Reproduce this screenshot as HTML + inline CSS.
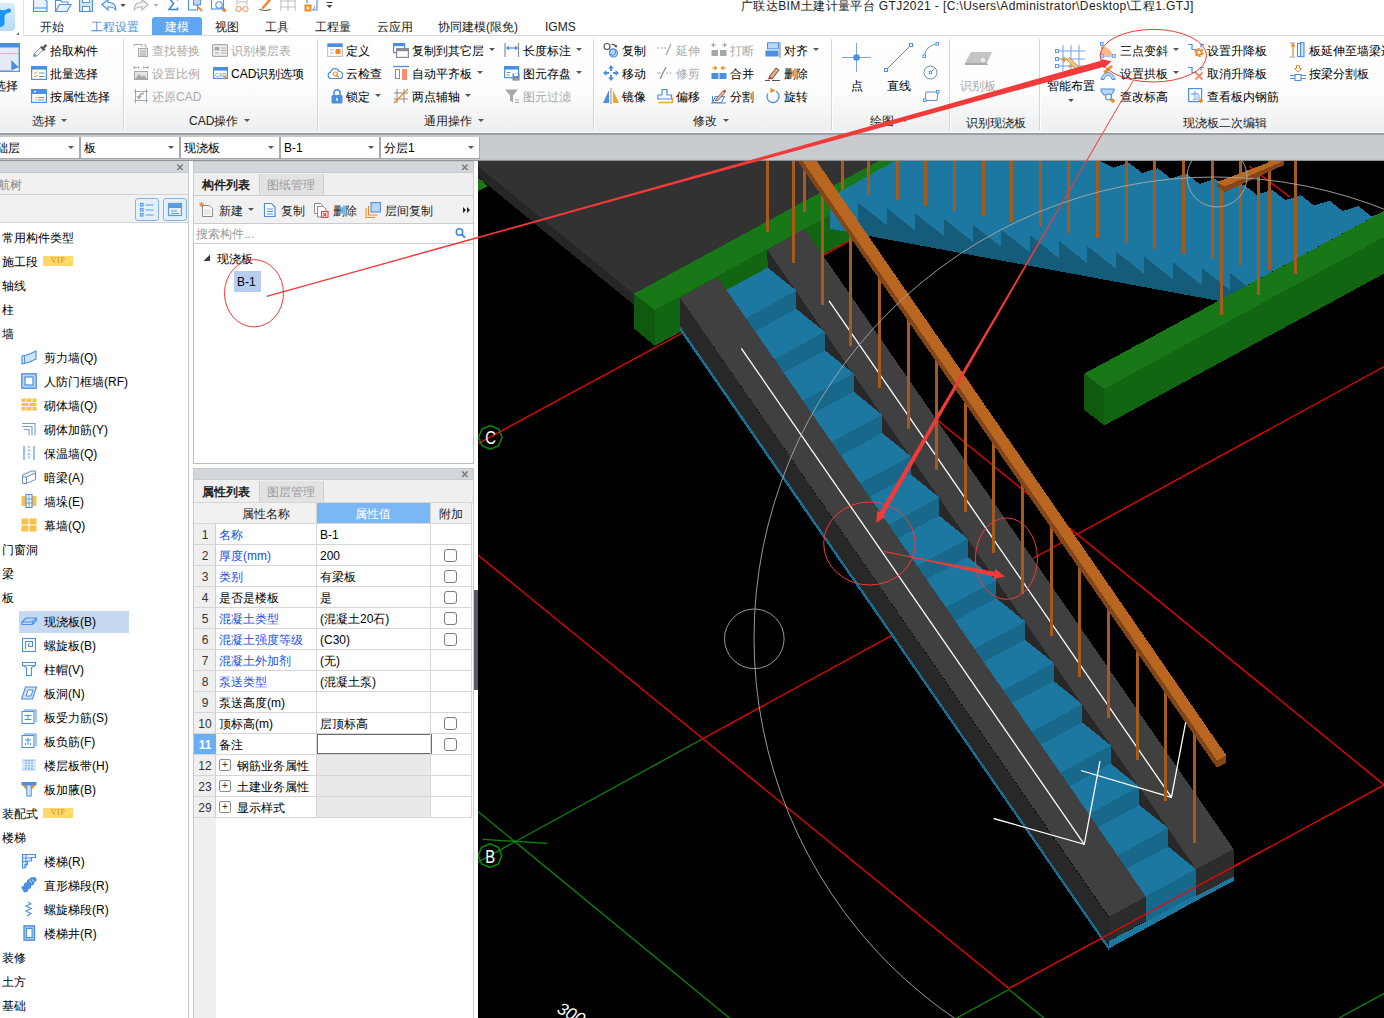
<!DOCTYPE html><html><head><meta charset="utf-8"><title>GTJ2021</title><style>
html,body{margin:0;padding:0}
body{width:1384px;height:1018px;overflow:hidden;position:relative;background:#fff;font-family:"Liberation Sans", sans-serif;font-size:12px}
.t{position:absolute;white-space:nowrap;font-family:"Liberation Sans", sans-serif}
.b{position:absolute;box-sizing:border-box}
svg{position:absolute;left:0;top:0;display:block}
.b svg{position:static}

</style></head><body>
<div class="b" style="left:0px;top:0px;width:1384px;height:36px;background:#ffffff;"></div>
<div class="t " style="left:741px;top:-2.3px;height:16px;line-height:16px;color:#222;font-size:12px;letter-spacing:0.4px">广联达BIM土建计量平台 GTJ2021 - [C:\Users\Administrator\Desktop\工程1.GTJ]</div>
<div class="b" style="left:-6px;top:3px;width:21px;height:28px;border-radius:4px;background:linear-gradient(#d6edfd,#b7dbf7)"></div>
<svg width="24" height="36" viewBox="0 0 24 36"><path d="M-2 9 Q3 11.500 8.500 8.500 Q11 8 11 10.200 Q11 12.500 8 13 Q5 13.500 4.500 16.500 L4.500 23.500 Q4 27 0 27 L-2 27 Z" fill="#1a97f5"/><path d="M16 35 L19 32 L19 35 Z" fill="#777"/></svg>
<div class="b" style="left:23px;top:0px;width:1px;height:36px;background:#e2e2e2;"></div>
<svg width="400" height="16" viewBox="0 0 400 16"><path d="M33.500 -2h10l3.500 3.500v10h-13.500z" fill="#eaf2fc" stroke="#4a8fe0" stroke-width="1.100"/><path d="M33.500 8h13.500" stroke="#4a8fe0" stroke-width="1"/><path d="M55.500 11.500v-11h5l1.500 1.500h6v2" fill="none" stroke="#4a8fe0" stroke-width="1.100"/><path d="M55.500 11.500l4-7h11.500l-4 7z" fill="#eaf2fc" stroke="#4a8fe0" stroke-width="1.100"/><rect x="79.500" y="-2" width="13" height="13.500" fill="#cfe2f8" stroke="#4a8fe0" stroke-width="1.100"/><rect x="82.500" y="-2" width="7" height="4.500" fill="#fff" stroke="#4a8fe0" stroke-width="0.900"/><rect x="82.500" y="6.500" width="7" height="5" fill="#fff" stroke="#4a8fe0" stroke-width="0.900"/><path d="M102 4.500l6-5v3q8-.500 8 8-2-4-8-3.500v3z" fill="#eaf2fc" stroke="#4a8fe0" stroke-width="1.100"/><path d="M120.500 4h5l-2.500 3z" fill="#444"/><path d="M148 4.500l-6-5v3q-8-.500-8 8 2-4 8-3.500v3z" fill="#f2f2f2" stroke="#b5b5b5" stroke-width="1.100"/><path d="M153.500 4h5l-2.500 3z" fill="#b5b5b5"/><path d="M177.500 0.500v-2.500h-8.500l4.500 5.500-4.500 6h8.500v-2" fill="none" stroke="#3c7fd0" stroke-width="1.500"/><rect x="188.500" y="-2" width="9" height="12" fill="#fff" stroke="#4a8fe0" stroke-width="1.100"/><rect x="193.500" y="-2" width="7" height="7" fill="#b9d6f7" stroke="#4a8fe0" stroke-width="0.900"/><path d="M198 7l4 4" stroke="#f08a24" stroke-width="1.800"/><rect x="211.500" y="-2" width="12" height="11" fill="#fff" stroke="#4a8fe0" stroke-width="1.100"/><circle cx="219" cy="5" r="3.200" fill="#fff" stroke="#4a8fe0" stroke-width="1.100"/><path d="M221.500 7.500l2.500 2.500" stroke="#4a8fe0" stroke-width="1.300"/><rect x="222.500" y="8.500" width="3.400" height="3.400" fill="#f08a24" transform="rotate(45 224.200 10.200)"/><path d="M237 -2v7M247 -2v7M238 2h8" stroke="#c7b8a8" stroke-width="1" fill="none"/><circle cx="238.500" cy="9" r="2.500" fill="none" stroke="#f0a070" stroke-width="1.100"/><circle cx="245.500" cy="9" r="2.500" fill="none" stroke="#f0a070" stroke-width="1.100"/><path d="M241 9h2" stroke="#f0a070" stroke-width="1"/><path d="M262 7l7-8 2 1.500-7 8-2.500.500z" fill="#f08a24"/><path d="M259 9.500q6 2 12 0" fill="none" stroke="#555" stroke-width="1"/><path d="M281 -2v13M288 -2v13M295 -2v13M280 1h16M280 7h16" stroke="#c4c4c4" stroke-width="1.100"/><path d="M307 3v-5h10v12h-5" fill="none" stroke="#4a8fe0" stroke-width="1.100"/><rect x="304.500" y="4.500" width="7" height="7" fill="#f08a24"/><path d="M308 6v4M306 8h4" stroke="#fff" stroke-width="1"/><path d="M314.500 6v3h-2" stroke="#8c8c8c" stroke-width="0.800" fill="none"/><path d="M326.500 2.500h6" stroke="#444" stroke-width="1"/><path d="M326.500 5h6l-3 3z" fill="#444"/></svg>
<div class="b" style="left:152px;top:17px;width:50px;height:19px;background:#5ea6f2;border-radius:3px 3px 0 0"></div>
<div class="t " style="left:165px;top:19.2px;height:16px;line-height:16px;color:#fff;font-size:12px;">建模</div>
<div class="t " style="left:40px;top:19.2px;height:16px;line-height:16px;color:#222;font-size:12px;">开始</div>
<div class="t " style="left:91px;top:19.2px;height:16px;line-height:16px;color:#4a90d9;font-size:12px;">工程设置</div>
<div class="t " style="left:215px;top:19.2px;height:16px;line-height:16px;color:#222;font-size:12px;">视图</div>
<div class="t " style="left:265px;top:19.2px;height:16px;line-height:16px;color:#222;font-size:12px;">工具</div>
<div class="t " style="left:315px;top:19.2px;height:16px;line-height:16px;color:#222;font-size:12px;">工程量</div>
<div class="t " style="left:377px;top:19.2px;height:16px;line-height:16px;color:#222;font-size:12px;">云应用</div>
<div class="t " style="left:438px;top:19.2px;height:16px;line-height:16px;color:#222;font-size:12px;">协同建模(限免)</div>
<div class="t " style="left:545px;top:19.2px;height:16px;line-height:16px;color:#222;font-size:12px;">IGMS</div>
<div class="b" style="left:0;top:36px;width:1384px;height:97px;background:linear-gradient(#ffffff 0%,#fdfdfd 55%,#eceeef 100%)"></div>
<div class="b" style="left:24px;top:35px;width:1360px;height:1px;background:#d9d9d9;"></div>
<div class="b" style="left:0px;top:131px;width:1384px;height:2px;background:#f4f5f6;"></div>
<div class="b" style="left:0px;top:133px;width:1384px;height:1px;background:#9b9ea3;"></div>
<div class="b" style="left:123px;top:39px;width:1px;height:91px;background:#d4d6d8;"></div>
<div class="b" style="left:124px;top:39px;width:1px;height:91px;background:#ffffff;"></div>
<div class="b" style="left:317px;top:39px;width:1px;height:91px;background:#d4d6d8;"></div>
<div class="b" style="left:318px;top:39px;width:1px;height:91px;background:#ffffff;"></div>
<div class="b" style="left:593px;top:39px;width:1px;height:91px;background:#d4d6d8;"></div>
<div class="b" style="left:594px;top:39px;width:1px;height:91px;background:#ffffff;"></div>
<div class="b" style="left:831px;top:39px;width:1px;height:91px;background:#d4d6d8;"></div>
<div class="b" style="left:832px;top:39px;width:1px;height:91px;background:#ffffff;"></div>
<div class="b" style="left:949px;top:39px;width:1px;height:91px;background:#d4d6d8;"></div>
<div class="b" style="left:950px;top:39px;width:1px;height:91px;background:#ffffff;"></div>
<div class="b" style="left:1039px;top:39px;width:1px;height:91px;background:#d4d6d8;"></div>
<div class="b" style="left:1040px;top:39px;width:1px;height:91px;background:#ffffff;"></div>
<div class="b" style="left:33px;top:42px;width:16px;height:16px"><svg width="16" height="16" viewBox="0 0 16 16"><path d="M0.500 14.500l1-3 6.500-6.500 2.500 2.500-6.500 6.500z" fill="#eef2f7" stroke="#8a8f96" stroke-width="0.900"/><path d="M0.500 14.500l1-3 2 2z" fill="#2f86e6"/><path d="M7 5.500l1.800-1.800 1 1 2.700-2.700 1.800 1.800-2.700 2.700 1 1-1.800 1.800z" fill="#5a5f66"/></svg></div>
<div class="t " style="left:50px;top:42.7px;height:16px;line-height:16px;color:#000;font-size:12px;">拾取构件</div>
<div class="b" style="left:133px;top:42px;width:16px;height:16px"><svg width="16" height="16" viewBox="0 0 16 16"><path d="M1 2.5h8M1 2.5v2M9 2.5v2" stroke="#a8a8a8" fill="none"/><path d="M11 3l2 0 0 3" stroke="#a8a8a8" fill="none"/><rect x="5.5" y="6.5" width="9" height="8" fill="#e8e8e8" stroke="#a8a8a8"/><path d="M7 9h6M7 11h6M7 13h6" stroke="#a8a8a8"/></svg></div>
<div class="t " style="left:152px;top:42.7px;height:16px;line-height:16px;color:#a9a9a9;font-size:12px;">查找替换</div>
<div class="b" style="left:212px;top:42px;width:16px;height:16px"><svg width="16" height="16" viewBox="0 0 16 16"><rect x="0.6" y="2.6" width="14.8" height="11.8" rx="1" fill="#f2f2f2" stroke="#a8a8a8" stroke-width="1.2"/><rect x="2.5" y="5" width="5" height="3.5" fill="#a8a8a8"/><path d="M9 6h5M9 8.5h5M3 11h4M9 11h5" stroke="#a8a8a8"/></svg></div>
<div class="t " style="left:231px;top:42.7px;height:16px;line-height:16px;color:#a9a9a9;font-size:12px;">识别楼层表</div>
<div class="b" style="left:327px;top:42px;width:16px;height:16px"><svg width="16" height="16" viewBox="0 0 16 16"><rect x="0.6" y="1.6" width="14.8" height="12.8" fill="#fff" stroke="#b9c6d6" stroke-width="1.2"/><rect x="0.6" y="1.6" width="14.8" height="3.4" fill="#4a8fe0"/><path d="M3 8h4M3 11h4" stroke="#9cc3f2" stroke-width="1.2"/><rect x="8.5" y="7" width="5" height="5" fill="#f08a24"/></svg></div>
<div class="t " style="left:346px;top:42.7px;height:16px;line-height:16px;color:#000;font-size:12px;">定义</div>
<div class="b" style="left:393px;top:42px;width:16px;height:16px"><svg width="16" height="16" viewBox="0 0 16 16"><rect x="0.6" y="1.6" width="11" height="9" fill="#fff" stroke="#4a8fe0" stroke-width="1.2"/><rect x="0.6" y="1.6" width="11" height="2.6" fill="#4a8fe0"/><rect x="3.6" y="6.6" width="11.8" height="8.8" fill="#fff" stroke="#8c8c8c" stroke-width="1.2"/><rect x="3.6" y="6.6" width="11.8" height="2.6" fill="#8c8c8c"/></svg></div>
<div class="t " style="left:412px;top:42.7px;height:16px;line-height:16px;color:#000;font-size:12px;">复制到其它层</div>
<div class="b" style="left:488.5px;top:48.25px;width:0;height:0;border-left:3.5px solid transparent;border-right:3.5px solid transparent;border-top:3.5px solid #555"></div>
<div class="b" style="left:504px;top:42px;width:16px;height:16px"><svg width="16" height="16" viewBox="0 0 16 16"><path d="M1 1v14M14.5 1v14" stroke="#8c8c8c" stroke-width="1.2"/><path d="M2.5 6h11" stroke="#4a8fe0" stroke-width="1.3"/><path d="M2 6l3-2.5v5zM14 6l-3-2.5v5z" fill="#4a8fe0"/></svg></div>
<div class="t " style="left:523px;top:42.7px;height:16px;line-height:16px;color:#000;font-size:12px;">长度标注</div>
<div class="b" style="left:575.5px;top:48.25px;width:0;height:0;border-left:3.5px solid transparent;border-right:3.5px solid transparent;border-top:3.5px solid #555"></div>
<div class="b" style="left:603px;top:42px;width:16px;height:16px"><svg width="16" height="16" viewBox="0 0 16 16"><circle cx="4" cy="4.5" r="3" fill="#fff" stroke="#555" stroke-width="1.1"/><path d="M8.5 2.5q3.5-.5 4.5 2" fill="none" stroke="#555" stroke-width="1.1"/><path d="M14.5 3l-1.2 3-2-2z" fill="#555"/><circle cx="10.5" cy="11" r="4" fill="#b9d6f7" stroke="#4a8fe0" stroke-width="1.2"/><circle cx="9.5" cy="10" r="3.2" fill="none" stroke="#4a8fe0" stroke-width="1"/></svg></div>
<div class="t " style="left:622px;top:42.7px;height:16px;line-height:16px;color:#000;font-size:12px;">复制</div>
<div class="b" style="left:657px;top:42px;width:16px;height:16px"><svg width="16" height="16" viewBox="0 0 16 16"><path d="M0 6h2M3.5 6h2M7 6h2" stroke="#a8a8a8" stroke-width="1.2"/><path d="M9 13l5-11" stroke="#a8a8a8" stroke-width="1.3"/></svg></div>
<div class="t " style="left:676px;top:42.7px;height:16px;line-height:16px;color:#a9a9a9;font-size:12px;">延伸</div>
<div class="b" style="left:711px;top:42px;width:16px;height:16px"><svg width="16" height="16" viewBox="0 0 16 16"><rect x="0.5" y="8" width="6.5" height="6" fill="#a8a8a8"/><rect x="9" y="8" width="6.5" height="6" fill="#a8a8a8"/><path d="M1 3h4M15 3h-4" stroke="#a8a8a8" stroke-width="1.2"/><path d="M0 3l3-2.5v5zM16 3l-3-2.5v5z" fill="#a8a8a8"/></svg></div>
<div class="t " style="left:730px;top:42.7px;height:16px;line-height:16px;color:#a9a9a9;font-size:12px;">打断</div>
<div class="b" style="left:765px;top:42px;width:16px;height:16px"><svg width="16" height="16" viewBox="0 0 16 16"><rect x="2.5" y="0.800" width="11" height="6" fill="#b9d6f7" stroke="#4a8fe0" stroke-width="1"/><rect x="0.5" y="8.500" width="13" height="6" fill="#4a8fe0"/><path d="M15 0v16" stroke="#8c8c8c" stroke-width="1.200"/></svg></div>
<div class="t " style="left:784px;top:42.7px;height:16px;line-height:16px;color:#000;font-size:12px;">对齐</div>
<div class="b" style="left:812.5px;top:48.25px;width:0;height:0;border-left:3.5px solid transparent;border-right:3.5px solid transparent;border-top:3.5px solid #555"></div>
<div class="b" style="left:1100px;top:42px;width:16px;height:16px"><svg width="16" height="16" viewBox="0 0 16 16"><path d="M2 3v11h13" fill="none" stroke="#4a8fe0" stroke-width="1.100"/><path d="M2 4c6 1 10 5 11 10h-11z" fill="#f7b98a"/><rect x="0.500" y="0.500" width="2.600" height="2.600" fill="#fff" stroke="#4a8fe0" stroke-width="0.900"/><rect x="0.700" y="12.700" width="2.600" height="2.600" fill="#fff" stroke="#4a8fe0" stroke-width="0.900"/><rect x="12.700" y="12.700" width="2.600" height="2.600" fill="#fff" stroke="#4a8fe0" stroke-width="0.900"/></svg></div>
<div class="t " style="left:1120px;top:42.7px;height:16px;line-height:16px;color:#000;font-size:12px;">三点变斜</div>
<div class="b" style="left:1172.5px;top:48.25px;width:0;height:0;border-left:3.5px solid transparent;border-right:3.5px solid transparent;border-top:3.5px solid #555"></div>
<div class="b" style="left:1188px;top:42px;width:16px;height:16px"><svg width="16" height="16" viewBox="0 0 16 16"><path d="M0 2.500h4v5h4.500" fill="none" stroke="#4a8fe0" stroke-width="1.200"/><path d="M16 2.500h-3v3" fill="none" stroke="#4a8fe0" stroke-width="1.200"/><circle cx="11" cy="10.500" r="3.400" fill="none" stroke="#f08a24" stroke-width="2.400" stroke-dasharray="2.200 1.300"/><circle cx="11" cy="10.500" r="2.500" fill="none" stroke="#f08a24" stroke-width="1.600"/></svg></div>
<div class="t " style="left:1207px;top:42.7px;height:16px;line-height:16px;color:#000;font-size:12px;">设置升降板</div>
<div class="b" style="left:1290px;top:42px;width:16px;height:16px"><svg width="16" height="16" viewBox="0 0 16 16"><path d="M3 3v11" stroke="#f08a24" stroke-width="1.300"/><path d="M3 1l2.500 3.500h-5z" fill="#f08a24"/><path d="M0 1h5M0 15h5" stroke="#8c8c8c" stroke-width="0.900"/><rect x="7.500" y="1.500" width="3" height="13" fill="#fff" stroke="#4a8fe0" stroke-width="1.100"/><rect x="10.500" y="0.700" width="3.500" height="14" fill="#cfe2f8" stroke="#4a8fe0" stroke-width="1.100"/></svg></div>
<div class="t " style="left:1309px;top:42.7px;height:16px;line-height:16px;color:#000;font-size:12px;">板延伸至墙梁边</div>
<div class="b" style="left:31px;top:65px;width:16px;height:16px"><svg width="16" height="16" viewBox="0 0 16 16"><rect x="0.6" y="1.6" width="14.8" height="12.8" fill="#fff" stroke="#4a8fe0" stroke-width="1.2"/><rect x="0.6" y="1.600" width="14.8" height="3" fill="#4a8fe0"/><path d="M3 7.500l1.200 1.200 2-2.200M3 11l1.200 1.200 2-2.200" stroke="#f08a24" stroke-width="1" fill="none"/><path d="M8 8h5.500M8 11.500h5.500" stroke="#7f8fa6" stroke-width="1.100"/></svg></div>
<div class="t " style="left:50px;top:65.7px;height:16px;line-height:16px;color:#000;font-size:12px;">批量选择</div>
<div class="b" style="left:133px;top:65px;width:16px;height:16px"><svg width="16" height="16" viewBox="0 0 16 16"><path d="M1 1v3M15 1v3M1 2.5h3M15 2.5h-3" stroke="#a8a8a8" fill="none"/><path d="M6 1l-2 1.5 2 1.5zM10 1l2 1.5-2 1.5z" fill="#a8a8a8"/><rect x="1.5" y="6.5" width="13" height="8" fill="#e4e4e4" stroke="#a8a8a8"/><path d="M2 14l4-5 3 3 2-2 3 4z" fill="#a8a8a8"/></svg></div>
<div class="t " style="left:152px;top:65.7px;height:16px;line-height:16px;color:#a9a9a9;font-size:12px;">设置比例</div>
<div class="b" style="left:213px;top:65px;width:16px;height:16px"><svg width="16" height="16" viewBox="0 0 16 16"><rect x="0.6" y="2.6" width="13.8" height="10.8" fill="#fff" stroke="#4a8fe0" stroke-width="1.2"/><rect x="0.6" y="2.6" width="13.8" height="3" fill="#4a8fe0"/><text x="7.5" y="11.8" font-size="5.5" text-anchor="middle" fill="#4a8fe0" font-family="Liberation Sans, sans-serif">CAD</text><path d="M11 10l4 3-2 .3 -1 2z" fill="#f08a24"/></svg></div>
<div class="t " style="left:231px;top:65.7px;height:16px;line-height:16px;color:#000;font-size:12px;">CAD识别选项</div>
<div class="b" style="left:327px;top:65px;width:16px;height:16px"><svg width="16" height="16" viewBox="0 0 16 16"><path d="M4 13.5a3.2 3.2 0 0 1-.3-6.3A4.3 4.3 0 0 1 12 6.5a3.5 3.5 0 0 1 .5 7z" fill="#fff" stroke="#4a8fe0" stroke-width="1.2"/><circle cx="8.3" cy="9" r="2" fill="none" stroke="#f08a24" stroke-width="1.2"/><path d="M9.8 10.5l2 2" stroke="#f08a24" stroke-width="1.3"/></svg></div>
<div class="t " style="left:346px;top:65.7px;height:16px;line-height:16px;color:#000;font-size:12px;">云检查</div>
<div class="b" style="left:393px;top:65px;width:16px;height:16px"><svg width="16" height="16" viewBox="0 0 16 16"><path d="M0 1.5h16" stroke="#4a8fe0" stroke-width="1.3"/><rect x="2.5" y="4.5" width="4" height="9" fill="#fff" stroke="#8c8c8c"/><rect x="9" y="4" width="5" height="11" fill="#f4906a"/></svg></div>
<div class="t " style="left:412px;top:65.7px;height:16px;line-height:16px;color:#000;font-size:12px;">自动平齐板</div>
<div class="b" style="left:476.5px;top:71.25px;width:0;height:0;border-left:3.5px solid transparent;border-right:3.5px solid transparent;border-top:3.5px solid #555"></div>
<div class="b" style="left:504px;top:65px;width:16px;height:16px"><svg width="16" height="16" viewBox="0 0 16 16"><rect x="0.6" y="1.6" width="14" height="11" fill="#fff" stroke="#4a8fe0" stroke-width="1.2"/><rect x="0.6" y="1.6" width="14" height="3" fill="#4a8fe0"/><path d="M2.5 7.5h4M2.5 10h3" stroke="#8c8c8c"/><rect x="8.5" y="8.5" width="7" height="7" fill="#4a8fe0"/><rect x="10" y="8.5" width="4" height="2.5" fill="#fff"/><rect x="10.5" y="12.5" width="3" height="3" fill="#f08a24"/></svg></div>
<div class="t " style="left:523px;top:65.7px;height:16px;line-height:16px;color:#000;font-size:12px;">图元存盘</div>
<div class="b" style="left:575.5px;top:71.25px;width:0;height:0;border-left:3.5px solid transparent;border-right:3.5px solid transparent;border-top:3.5px solid #555"></div>
<div class="b" style="left:603px;top:65px;width:16px;height:16px"><svg width="16" height="16" viewBox="0 0 16 16"><path d="M8 0l3 3.5h-2v2.5h-2v-2.5h-2zM8 16l3-3.5h-2v-2.5h-2v2.5h-2zM0 8l3.5-3v2h2.5v2h-2.5v2zM16 8l-3.5-3v2h-2.5v2h2.5v2z" fill="#4a8fe0"/></svg></div>
<div class="t " style="left:622px;top:65.7px;height:16px;line-height:16px;color:#000;font-size:12px;">移动</div>
<div class="b" style="left:657px;top:65px;width:16px;height:16px"><svg width="16" height="16" viewBox="0 0 16 16"><path d="M0 8h4M9 8h2M12.5 8h2" stroke="#a8a8a8" stroke-width="1.2"/><path d="M3 14l6-12" stroke="#8c8c8c" stroke-width="1.3"/></svg></div>
<div class="t " style="left:676px;top:65.7px;height:16px;line-height:16px;color:#a9a9a9;font-size:12px;">修剪</div>
<div class="b" style="left:711px;top:65px;width:16px;height:16px"><svg width="16" height="16" viewBox="0 0 16 16"><rect x="0.5" y="8" width="7" height="6" fill="#4a8fe0"/><rect x="8.5" y="8" width="7" height="6" fill="#4a8fe0"/><path d="M1 3h3M15 3h-3" stroke="#f08a24" stroke-width="1.2"/><path d="M6.5 3l-3-2.5v5zM9.500 3l3-2.5v5z" fill="#f08a24"/></svg></div>
<div class="t " style="left:730px;top:65.7px;height:16px;line-height:16px;color:#000;font-size:12px;">合并</div>
<div class="b" style="left:765px;top:65px;width:16px;height:16px"><svg width="16" height="16" viewBox="0 0 16 16"><path d="M4 12l7-9 3 2-7 9z" fill="#d9b38c" stroke="#6b4a2a" stroke-width="1"/><path d="M2.500 14.500l2-3 3 2z" fill="#c0392b"/><path d="M0 15.500h5M7 15.500h8" stroke="#555" stroke-width="1"/></svg></div>
<div class="t " style="left:784px;top:65.7px;height:16px;line-height:16px;color:#000;font-size:12px;">删除</div>
<div class="b" style="left:1100px;top:65px;width:16px;height:16px"><svg width="16" height="16" viewBox="0 0 16 16"><path d="M1 14.500c1-5 5-7 7-7s6 2 7 7h-3c-.500-2.500-2-4-4-4s-3.500 1.500-4 4z" fill="#b9d6f7" stroke="#4a8fe0" stroke-width="1"/><path d="M3 7l8-7 2 1.500-7 7z" fill="#f08a24"/></svg></div>
<div class="t " style="left:1120px;top:65.7px;height:16px;line-height:16px;color:#000;font-size:12px;">设置拱板</div>
<div class="b" style="left:1172.5px;top:71.25px;width:0;height:0;border-left:3.5px solid transparent;border-right:3.5px solid transparent;border-top:3.5px solid #555"></div>
<div class="b" style="left:1188px;top:65px;width:16px;height:16px"><svg width="16" height="16" viewBox="0 0 16 16"><path d="M0 2.500h4v5h4.500" fill="none" stroke="#4a8fe0" stroke-width="1.200"/><path d="M16 2.500h-3v3" fill="none" stroke="#4a8fe0" stroke-width="1.200"/><path d="M7.500 7.500l7 7M14.500 7.500l-7 7" stroke="#f08a6a" stroke-width="1.800"/></svg></div>
<div class="t " style="left:1207px;top:65.7px;height:16px;line-height:16px;color:#000;font-size:12px;">取消升降板</div>
<div class="b" style="left:1290px;top:65px;width:16px;height:16px"><svg width="16" height="16" viewBox="0 0 16 16"><path d="M6.500 0.500h3v3h2l-3.500 3.500-3.500-3.500h2z" fill="#fff" stroke="#f08a24" stroke-width="1"/><rect x="5" y="9.500" width="6" height="6" fill="#fff" stroke="#4a8fe0" stroke-width="1.100"/><path d="M0 10.500h5M11 10.500h5M0 13.500h5M11 13.500h5" stroke="#4a8fe0" stroke-width="1.100"/></svg></div>
<div class="t " style="left:1309px;top:65.7px;height:16px;line-height:16px;color:#000;font-size:12px;">按梁分割板</div>
<div class="b" style="left:31px;top:88px;width:16px;height:16px"><svg width="16" height="16" viewBox="0 0 16 16"><rect x="0.6" y="1.600" width="14.8" height="12.800" fill="#fff" stroke="#4a8fe0" stroke-width="1.2"/><rect x="0.6" y="1.600" width="14.8" height="4.400" fill="#4a8fe0"/><path d="M2.500 3l1.500 1.800 1.500-1.800z" fill="#fff"/><path d="M4.500 9.500h1.200M4.500 12h1.200M7 9.500h6M7 12h6" stroke="#7f8fa6" stroke-width="1.100"/></svg></div>
<div class="t " style="left:50px;top:88.7px;height:16px;line-height:16px;color:#000;font-size:12px;">按属性选择</div>
<div class="b" style="left:133px;top:88px;width:16px;height:16px"><svg width="16" height="16" viewBox="0 0 16 16"><path d="M2.5 1v14M13.5 1v14M1 3.5h14M1 12.5h14" stroke="#a8a8a8" fill="none"/><path d="M11 5.5q-5 0-5 4.5M4 8l2 2.5 2-2.5" stroke="#a8a8a8" fill="none" stroke-width="1.3"/></svg></div>
<div class="t " style="left:152px;top:88.7px;height:16px;line-height:16px;color:#a9a9a9;font-size:12px;">还原CAD</div>
<div class="b" style="left:329px;top:88px;width:16px;height:16px"><svg width="16" height="16" viewBox="0 0 16 16"><rect x="2.5" y="7" width="11" height="8.5" rx="1.5" fill="#4a8fe0"/><path d="M5 7V4.8a3 3 0 0 1 6 0V7" fill="none" stroke="#4a8fe0" stroke-width="1.6"/><rect x="7.3" y="10" width="1.4" height="3" fill="#fff"/></svg></div>
<div class="t " style="left:346px;top:88.7px;height:16px;line-height:16px;color:#000;font-size:12px;">锁定</div>
<div class="b" style="left:374.5px;top:94.25px;width:0;height:0;border-left:3.5px solid transparent;border-right:3.5px solid transparent;border-top:3.5px solid #555"></div>
<div class="b" style="left:393px;top:88px;width:16px;height:16px"><svg width="16" height="16" viewBox="0 0 16 16"><path d="M4 1v14M11 1v14M1 5h14M1 11h14" stroke="#8c8c8c" stroke-width="1"/><path d="M1 15L15 1" stroke="#f08a24" stroke-width="1.2"/></svg></div>
<div class="t " style="left:412px;top:88.7px;height:16px;line-height:16px;color:#000;font-size:12px;">两点辅轴</div>
<div class="b" style="left:464.5px;top:94.25px;width:0;height:0;border-left:3.5px solid transparent;border-right:3.5px solid transparent;border-top:3.5px solid #555"></div>
<div class="b" style="left:504px;top:88px;width:16px;height:16px"><svg width="16" height="16" viewBox="0 0 16 16"><path d="M1 1.5h13l-5 6v7l-3-2v-5z" fill="#a8a8a8"/><path d="M11 12h4M11 14.5h4" stroke="#a8a8a8" stroke-width="1.2"/></svg></div>
<div class="t " style="left:523px;top:88.7px;height:16px;line-height:16px;color:#a9a9a9;font-size:12px;">图元过滤</div>
<div class="b" style="left:603px;top:88px;width:16px;height:16px"><svg width="16" height="16" viewBox="0 0 16 16"><path d="M6 2v13h-6z" fill="#4a8fe0"/><path d="M10 2v13h6z" fill="#f5a623"/><path d="M8 0v16" stroke="#8c8c8c" stroke-width="1"/></svg></div>
<div class="t " style="left:622px;top:88.7px;height:16px;line-height:16px;color:#000;font-size:12px;">镜像</div>
<div class="b" style="left:657px;top:88px;width:16px;height:16px"><svg width="16" height="16" viewBox="0 0 16 16"><path d="M5 1.5h5v5.5h4.5v4h-13.5v-4h4z" fill="#fff" stroke="#4a8fe0" stroke-width="1.2"/><path d="M1.5 14.5h14v-5" fill="none" stroke="#f5a623" stroke-width="1.4"/></svg></div>
<div class="t " style="left:676px;top:88.7px;height:16px;line-height:16px;color:#000;font-size:12px;">偏移</div>
<div class="b" style="left:711px;top:88px;width:16px;height:16px"><svg width="16" height="16" viewBox="0 0 16 16"><path d="M3.5 8.500h9l-2 6h-9z" fill="#fff" stroke="#4a8fe0" stroke-width="1.1" transform="translate(2,0) skewX(-8)"/><path d="M0 15h15M1.5 8v7" stroke="#4a8fe0" stroke-width="1"/><path d="M5 11l7-8 2 1.500-7 8-2.500.500z" fill="#f3b9a0" stroke="#7a5a50" stroke-width="0.900"/><path d="M12 3l1.500-1.500 2 1.500-1.500 1.500z" fill="#d94a3a"/></svg></div>
<div class="t " style="left:730px;top:88.7px;height:16px;line-height:16px;color:#000;font-size:12px;">分割</div>
<div class="b" style="left:765px;top:88px;width:16px;height:16px"><svg width="16" height="16" viewBox="0 0 16 16"><path d="M8 2.500a6 6 0 1 0 6 6" fill="none" stroke="#4a8fe0" stroke-width="1.300" transform="rotate(-60 8 8.500)"/><path d="M5.500 0l5 2.500-5 2.500z" fill="#f08a24"/></svg></div>
<div class="t " style="left:784px;top:88.7px;height:16px;line-height:16px;color:#000;font-size:12px;">旋转</div>
<div class="b" style="left:1100px;top:88px;width:16px;height:16px"><svg width="16" height="16" viewBox="0 0 16 16"><path d="M1 1h13v2l-3 4h-7l-3-4z" fill="#b9d6f7" stroke="#4a8fe0" stroke-width="1.100"/><circle cx="8.500" cy="9" r="3" fill="#fff" stroke="#4a8fe0" stroke-width="1.200"/><path d="M10.500 11l2 2" stroke="#4a8fe0" stroke-width="1.400"/><rect x="11" y="11" width="3.600" height="3.600" fill="#f08a24" transform="rotate(45 12.800 12.800)"/></svg></div>
<div class="t " style="left:1120px;top:88.7px;height:16px;line-height:16px;color:#000;font-size:12px;">查改标高</div>
<div class="b" style="left:1188px;top:88px;width:16px;height:16px"><svg width="16" height="16" viewBox="0 0 16 16"><rect x="0.600" y="0.600" width="13" height="13" fill="#fff" stroke="#4a8fe0" stroke-width="1.200"/><path d="M3 6h8M7 3v7q0 2-2 2" fill="none" stroke="#4a8fe0" stroke-width="1"/><circle cx="9" cy="9" r="2.800" fill="#c9dcf5" stroke="#9cc3f2" stroke-width="0.800"/><rect x="11" y="11" width="3.600" height="3.600" fill="#f08a24" transform="rotate(45 12.800 12.800)"/></svg></div>
<div class="t " style="left:1207px;top:88.7px;height:16px;line-height:16px;color:#000;font-size:12px;">查看板内钢筋</div>
<div class="t " style="left:32px;top:112.7px;height:16px;line-height:16px;color:#222;font-size:12px;">选择</div>
<div class="b" style="left:60.5px;top:119.25px;width:0;height:0;border-left:3.5px solid transparent;border-right:3.5px solid transparent;border-top:3.5px solid #555"></div>
<div class="t " style="left:189px;top:112.7px;height:16px;line-height:16px;color:#222;font-size:12px;">CAD操作</div>
<div class="b" style="left:243.5px;top:119.25px;width:0;height:0;border-left:3.5px solid transparent;border-right:3.5px solid transparent;border-top:3.5px solid #555"></div>
<div class="t " style="left:424px;top:112.7px;height:16px;line-height:16px;color:#222;font-size:12px;">通用操作</div>
<div class="b" style="left:477.5px;top:119.25px;width:0;height:0;border-left:3.5px solid transparent;border-right:3.5px solid transparent;border-top:3.5px solid #555"></div>
<div class="t " style="left:693px;top:112.7px;height:16px;line-height:16px;color:#222;font-size:12px;">修改</div>
<div class="b" style="left:722.5px;top:119.25px;width:0;height:0;border-left:3.5px solid transparent;border-right:3.5px solid transparent;border-top:3.5px solid #555"></div>
<div class="t " style="left:870px;top:112.7px;height:16px;line-height:16px;color:#222;font-size:12px;">绘图</div>
<div class="b" style="left:901.5px;top:119.25px;width:0;height:0;border-left:3.5px solid transparent;border-right:3.5px solid transparent;border-top:3.5px solid #555"></div>
<div class="t " style="left:966px;top:114.7px;height:16px;line-height:16px;color:#222;font-size:12px;">识别现浇板</div>
<div class="t " style="left:1183px;top:114.7px;height:16px;line-height:16px;color:#222;font-size:12px;">现浇板二次编辑</div>
<svg width="1384" height="134" viewBox="0 0 1384 134"><rect x="-8" y="43.700" width="27.300" height="27.500" fill="#e4ebf7" stroke="#4a8fe0" stroke-width="1.400"/><rect x="-8" y="43" width="28" height="4.500" fill="#4a8fe0"/><path d="M0 53.500h18.500" stroke="#f5ab00" stroke-width="1" stroke-dasharray="1.600 0.900"/><path d="M11.300 60l7.700 7.500-7.700 3z" fill="#4a8fe0"/><path d="M11.300 70.500l7.300-2.800v2.800z" fill="#fff"/><path d="M842 57.500h29M856.500 43v29" stroke="#7fa6d6" stroke-width="1"/><circle cx="856.500" cy="57.500" r="3.300" fill="#4a8fe0"/><path d="M886 70L911 45" stroke="#6f8fb8" stroke-width="1"/><rect x="884.500" y="68.500" width="3" height="3" fill="#fff" stroke="#4a8fe0"/><rect x="909.500" y="43.500" width="3" height="3" fill="#fff" stroke="#4a8fe0"/><path d="M924.500 56q1-10 12-12" fill="none" stroke="#6f8fb8" stroke-width="1"/><rect x="923" y="55" width="2.600" height="2.600" fill="#fff" stroke="#4a8fe0" stroke-width="0.900"/><rect x="936" y="42.500" width="2.600" height="2.600" fill="#fff" stroke="#4a8fe0" stroke-width="0.900"/><circle cx="930.500" cy="72.500" r="6.500" fill="none" stroke="#6f8fb8" stroke-width="1"/><path d="M930.500 72.500l4-4" stroke="#6f8fb8" stroke-width="1"/><rect x="929.300" y="71.300" width="2.400" height="2.400" fill="#fff" stroke="#4a8fe0" stroke-width="0.900"/><path d="M925 100.500l1-8.500h12l-1 8.500z" fill="none" stroke="#6f8fb8" stroke-width="1"/><rect x="923.500" y="99" width="2.600" height="2.600" fill="#fff" stroke="#4a8fe0" stroke-width="0.900"/><rect x="936.500" y="90.500" width="2.600" height="2.600" fill="#fff" stroke="#4a8fe0" stroke-width="0.900"/><path d="M971 52h21l-5 11h-22z" fill="#c4c4c4"/><path d="M965 63h22v2h-22z" fill="#a9a9a9"/><circle cx="983" cy="60" r="3" fill="#e8e8e8" stroke="#bdbdbd" stroke-width="1"/><path d="M985 62l3 3" stroke="#bdbdbd" stroke-width="1.300"/><path d="M1063 45v26M1071 45v26M1079 45v26M1057 51h28M1057 59h28M1057 66h28" stroke="#6ea3e6" stroke-width="1"/><rect x="1055.500" y="49.500" width="3" height="3" fill="#fff" stroke="#4a8fe0" stroke-width="0.900"/><rect x="1055.500" y="57.500" width="3" height="3" fill="#fff" stroke="#4a8fe0" stroke-width="0.900"/><rect x="1055.500" y="64.500" width="3" height="3" fill="#fff" stroke="#4a8fe0" stroke-width="0.900"/><path d="M1067 60l11 11 2.500-2.500-11-11z" fill="#f2c48a" stroke="#c98a3a" stroke-width="0.800"/><path d="M1064 56l1 2.500 2.500 1-2.500 1-1 2.500-1-2.500-2.500-1 2.500-1zM1070 64l.7 1.600 1.600.7-1.600.7-.7 1.600-.7-1.600-1.600-.7 1.600-.7z" fill="#f08a24"/></svg>
<div class="t " style="left:-6px;top:77.7px;height:16px;line-height:16px;color:#000;font-size:12px;">选择</div>
<div class="t " style="left:851px;top:77.7px;height:16px;line-height:16px;color:#000;font-size:12px;">点</div>
<div class="t " style="left:887px;top:77.7px;height:16px;line-height:16px;color:#000;font-size:12px;">直线</div>
<div class="t " style="left:960px;top:77.7px;height:16px;line-height:16px;color:#a9a9a9;font-size:12px;">识别板</div>
<div class="t " style="left:1047px;top:77.7px;height:16px;line-height:16px;color:#000;font-size:12px;">智能布置</div>
<div class="b" style="left:1067.5px;top:99.25px;width:0;height:0;border-left:3.5px solid transparent;border-right:3.5px solid transparent;border-top:3.5px solid #555"></div>
<div class="b" style="left:0px;top:134px;width:1384px;height:27px;background:#c8cbd0;"></div>
<div class="b" style="left:0px;top:133px;width:1384px;height:2px;background:#9c9fa4;"></div>
<div class="b" style="left:0px;top:159px;width:1384px;height:1px;background:#c2c5ca;"></div>
<div class="b" style="left:0px;top:160px;width:1384px;height:1px;background:#8f9297;"></div>
<div class="b" style="left:0px;top:137px;width:480px;height:22px;background:#a6a9ae;"></div>
<div class="b" style="left:0px;top:137px;width:79px;height:21px;background:#ffffff;"></div>
<div class="t " style="left:-4px;top:140.2px;height:16px;line-height:16px;color:#000;font-size:12px;">础层</div>
<div class="b" style="left:68px;top:145.9px;width:0;height:0;border-left:3px solid transparent;border-right:3px solid transparent;border-top:3.2px solid #555"></div>
<div class="b" style="left:81px;top:137px;width:98px;height:21px;background:#ffffff;"></div>
<div class="t " style="left:84px;top:140.2px;height:16px;line-height:16px;color:#000;font-size:12px;">板</div>
<div class="b" style="left:168px;top:145.9px;width:0;height:0;border-left:3px solid transparent;border-right:3px solid transparent;border-top:3.2px solid #555"></div>
<div class="b" style="left:181px;top:137px;width:98px;height:21px;background:#ffffff;"></div>
<div class="t " style="left:184px;top:140.2px;height:16px;line-height:16px;color:#000;font-size:12px;">现浇板</div>
<div class="b" style="left:268px;top:145.9px;width:0;height:0;border-left:3px solid transparent;border-right:3px solid transparent;border-top:3.2px solid #555"></div>
<div class="b" style="left:281px;top:137px;width:98px;height:21px;background:#ffffff;"></div>
<div class="t " style="left:284px;top:140.2px;height:16px;line-height:16px;color:#000;font-size:12px;">B-1</div>
<div class="b" style="left:368px;top:145.9px;width:0;height:0;border-left:3px solid transparent;border-right:3px solid transparent;border-top:3.2px solid #555"></div>
<div class="b" style="left:381px;top:137px;width:98px;height:21px;background:#ffffff;"></div>
<div class="t " style="left:384px;top:140.2px;height:16px;line-height:16px;color:#000;font-size:12px;">分层1</div>
<div class="b" style="left:468px;top:145.9px;width:0;height:0;border-left:3px solid transparent;border-right:3px solid transparent;border-top:3.2px solid #555"></div>
<div class="b" style="left:0px;top:161px;width:189px;height:12px;background:#d3d6db;"></div>
<div class="b" style="left:0px;top:172px;width:189px;height:1px;background:#c3c6cb;"></div>
<svg width="1384" height="1018" viewBox="0 0 1384 1018" style="pointer-events:none"><path d="M177.300 164.500l5.400 5.400M182.700 164.500l-5.400 5.400" stroke="#787878" stroke-width="1.400"/></svg>
<div class="b" style="left:0px;top:173px;width:189px;height:22px;background:#f1f1f1;"></div>
<div class="t " style="left:-2px;top:176.7px;height:16px;line-height:16px;color:#8a8a8a;font-size:12px;">航树</div>
<div class="b" style="left:0px;top:194px;width:189px;height:1px;background:#cfd2d6;"></div>
<div class="b" style="left:0px;top:195px;width:189px;height:28px;background:#f1f1f1;"></div>
<div class="b" style="left:0px;top:222px;width:189px;height:1px;background:#cfd2d6;"></div>
<div class="b" style="left:135px;top:198px;width:24px;height:23px;background:#e6f0fc;border:1px solid #7db3ee;border-radius:3px"></div>
<div class="b" style="left:163px;top:198px;width:24px;height:23px;background:#e6f0fc;border:1px solid #7db3ee;border-radius:3px"></div>
<svg width="189" height="230" viewBox="0 0 189 230"><g stroke="#5b9be0" stroke-width="1.2" fill="none"><rect x="140.5" y="203.5" width="2.5" height="2.5"/><rect x="140.5" y="208.5" width="2.5" height="2.5"/><rect x="140.5" y="213.5" width="2.5" height="2.5"/><path d="M145.5 205h8M145.5 210h8M145.5 215h8"/><rect x="168.5" y="203.5" width="13" height="12"/><path d="M168.5 207.5h13M171 211h6M171 213.5h8" /></g><path d="M169 204h12v3h-12z" fill="#5b9be0"/></svg>
<div class="b" style="left:188px;top:161px;width:1px;height:857px;background:#c8cbcf;"></div>
<div class="b" style="left:189px;top:161px;width:4px;height:857px;background:#ffffff;"></div>
<div class="b" style="left:19px;top:611px;width:110px;height:22px;background:#c6d9f2;"></div>
<div class="t " style="left:2px;top:229.7px;height:16px;line-height:16px;color:#000;font-size:12px;">常用构件类型</div>
<div class="t " style="left:2px;top:253.7px;height:16px;line-height:16px;color:#000;font-size:12px;">施工段</div>
<div class="t " style="left:2px;top:277.7px;height:16px;line-height:16px;color:#000;font-size:12px;">轴线</div>
<div class="t " style="left:2px;top:301.7px;height:16px;line-height:16px;color:#000;font-size:12px;">柱</div>
<div class="t " style="left:2px;top:325.7px;height:16px;line-height:16px;color:#000;font-size:12px;">墙</div>
<div class="b" style="left:21px;top:349px;width:16px;height:16px"><svg width="16" height="16" viewBox="0 0 16 16"><path d="M1 7q7-1 14-5v8q-7 4-14 5z" fill="#cfe2f8" stroke="#4a8fe0" stroke-width="1.100"/><path d="M3.500 6.800v8" stroke="#4a8fe0" stroke-width="1"/></svg></div>
<div class="t " style="left:44px;top:349.7px;height:16px;line-height:16px;color:#000;font-size:12px;">剪力墙(Q)</div>
<div class="b" style="left:21px;top:373px;width:16px;height:16px"><svg width="16" height="16" viewBox="0 0 16 16"><rect x="0.800" y="0.800" width="14.400" height="14.400" fill="#b9d6f7" stroke="#4a8fe0" stroke-width="1.300"/><rect x="4" y="4" width="8" height="8" fill="#fff" stroke="#4a8fe0" stroke-width="1.200"/></svg></div>
<div class="t " style="left:44px;top:373.7px;height:16px;line-height:16px;color:#000;font-size:12px;">人防门框墙(RF)</div>
<div class="b" style="left:21px;top:397px;width:16px;height:16px"><svg width="16" height="16" viewBox="0 0 16 16"><rect x="0.500" y="1.500" width="15" height="12" fill="#fbc04a"/><path d="M0.500 5.500h15M0.500 9.500h15M5 1.500v4M11 1.500v4M8 5.500v4M5 9.500v4M11 9.500v4" stroke="#fff" stroke-width="1"/></svg></div>
<div class="t " style="left:44px;top:397.7px;height:16px;line-height:16px;color:#000;font-size:12px;">砌体墙(Q)</div>
<div class="b" style="left:21px;top:421px;width:16px;height:16px"><svg width="16" height="16" viewBox="0 0 16 16"><path d="M1 2.500h13v12M1 5.500h10v9M3 8.500h5v6" fill="none" stroke="#7c9cc4" stroke-width="1.100"/></svg></div>
<div class="t " style="left:44px;top:421.7px;height:16px;line-height:16px;color:#000;font-size:12px;">砌体加筋(Y)</div>
<div class="b" style="left:21px;top:445px;width:16px;height:16px"><svg width="16" height="16" viewBox="0 0 16 16"><path d="M3 1v14M13 1v14" stroke="#4a8fe0" stroke-width="1.100"/><path d="M8 1v14" stroke="#4a8fe0" stroke-width="1" stroke-dasharray="2 1.500"/><path d="M3 5h10M3 10h10" stroke="#9cc3f2" stroke-width="0.800" stroke-dasharray="1.500 1.500"/></svg></div>
<div class="t " style="left:44px;top:445.7px;height:16px;line-height:16px;color:#000;font-size:12px;">保温墙(Q)</div>
<div class="b" style="left:21px;top:469px;width:16px;height:16px"><svg width="16" height="16" viewBox="0 0 16 16"><path d="M1.500 6l9-4h4v2l-9 4h-4z" fill="#eaf2fc" stroke="#6f8fb8" stroke-width="1"/><path d="M1.500 6v8.500h4v-6.500M5.500 14.500l9-4v-6.500" fill="none" stroke="#6f8fb8" stroke-width="1"/></svg></div>
<div class="t " style="left:44px;top:469.7px;height:16px;line-height:16px;color:#000;font-size:12px;">暗梁(A)</div>
<div class="b" style="left:21px;top:493px;width:16px;height:16px"><svg width="16" height="16" viewBox="0 0 16 16"><rect x="0.500" y="3" width="15" height="10" fill="#fbc04a"/><rect x="5" y="1.500" width="6" height="13" fill="#fff" stroke="#4a8fe0" stroke-width="1.100"/><path d="M8 1.500v13M5 6h6M5 10h6" stroke="#4a8fe0" stroke-width="0.800"/></svg></div>
<div class="t " style="left:44px;top:493.7px;height:16px;line-height:16px;color:#000;font-size:12px;">墙垛(E)</div>
<div class="b" style="left:21px;top:517px;width:16px;height:16px"><svg width="16" height="16" viewBox="0 0 16 16"><rect x="0.500" y="1.500" width="15" height="13" fill="#fbc04a"/><path d="M0.500 8h15M8 1.500v13" stroke="#fff" stroke-width="1.200"/></svg></div>
<div class="t " style="left:44px;top:517.7px;height:16px;line-height:16px;color:#000;font-size:12px;">幕墙(Q)</div>
<div class="t " style="left:2px;top:541.7px;height:16px;line-height:16px;color:#000;font-size:12px;">门窗洞</div>
<div class="t " style="left:2px;top:565.7px;height:16px;line-height:16px;color:#000;font-size:12px;">梁</div>
<div class="t " style="left:2px;top:589.7px;height:16px;line-height:16px;color:#000;font-size:12px;">板</div>
<div class="b" style="left:21px;top:613px;width:16px;height:16px"><svg width="16" height="16" viewBox="0 0 16 16"><path d="M1 9l4-4h10.500l-4 4z" fill="#b9d6f7" stroke="#4a8fe0" stroke-width="1.100"/><path d="M1 9v2.500h10.500l4-4v-2.500M11.500 9v2.500" fill="none" stroke="#4a8fe0" stroke-width="1.100"/></svg></div>
<div class="t " style="left:44px;top:613.7px;height:16px;line-height:16px;color:#000;font-size:12px;">现浇板(B)</div>
<div class="b" style="left:21px;top:637px;width:16px;height:16px"><svg width="16" height="16" viewBox="0 0 16 16"><rect x="1.500" y="1.500" width="13" height="13" fill="none" stroke="#4a8fe0" stroke-width="1.100"/><path d="M4.500 12v-7.500h7v5h-4v-2.500h1.500" fill="none" stroke="#4a8fe0" stroke-width="1.100"/></svg></div>
<div class="t " style="left:44px;top:637.7px;height:16px;line-height:16px;color:#000;font-size:12px;">螺旋板(B)</div>
<div class="b" style="left:21px;top:661px;width:16px;height:16px"><svg width="16" height="16" viewBox="0 0 16 16"><path d="M1.500 1.500h13v3l-4 2v8h-5v-8l-4-2z" fill="#fff" stroke="#4a8fe0" stroke-width="1.100"/><path d="M1.500 4.500h13" stroke="#4a8fe0" stroke-width="0.900"/></svg></div>
<div class="t " style="left:44px;top:661.7px;height:16px;line-height:16px;color:#000;font-size:12px;">柱帽(V)</div>
<div class="b" style="left:21px;top:685px;width:16px;height:16px"><svg width="16" height="16" viewBox="0 0 16 16"><path d="M4.500 2h11l-4 12h-11z" fill="#cfe2f8" stroke="#4a8fe0" stroke-width="1.100"/><path d="M7 5h5l-2 6h-5z" fill="#fff" stroke="#4a8fe0" stroke-width="1"/></svg></div>
<div class="t " style="left:44px;top:685.7px;height:16px;line-height:16px;color:#000;font-size:12px;">板洞(N)</div>
<div class="b" style="left:21px;top:709px;width:16px;height:16px"><svg width="16" height="16" viewBox="0 0 16 16"><rect x="1" y="2.500" width="12" height="12" fill="#fff" stroke="#4a8fe0" stroke-width="1.100"/><path d="M3 1h12v12" fill="none" stroke="#4a8fe0" stroke-width="1"/><path d="M3.500 6.500h7M3.500 10.500h7M7 6.500v4" stroke="#4a8fe0" stroke-width="1"/></svg></div>
<div class="t " style="left:44px;top:709.7px;height:16px;line-height:16px;color:#000;font-size:12px;">板受力筋(S)</div>
<div class="b" style="left:21px;top:733px;width:16px;height:16px"><svg width="16" height="16" viewBox="0 0 16 16"><rect x="1" y="2.500" width="12" height="12" fill="#fff" stroke="#4a8fe0" stroke-width="1.100"/><path d="M3 1h12v12" fill="none" stroke="#4a8fe0" stroke-width="1"/><path d="M4 7h6M7 5v7M4.500 10v2M9.500 10v2" stroke="#4a8fe0" stroke-width="1"/></svg></div>
<div class="t " style="left:44px;top:733.7px;height:16px;line-height:16px;color:#000;font-size:12px;">板负筋(F)</div>
<div class="b" style="left:21px;top:757px;width:16px;height:16px"><svg width="16" height="16" viewBox="0 0 16 16"><rect x="1" y="3" width="14" height="10" fill="#dbe9fa"/><path d="M1 3h14M1 13h14" stroke="#9cc3f2" stroke-width="1"/><path d="M5 3v10M8 3v10M11 3v10" stroke="#4a8fe0" stroke-width="1" stroke-dasharray="1.500 1"/></svg></div>
<div class="t " style="left:44px;top:757.7px;height:16px;line-height:16px;color:#000;font-size:12px;">楼层板带(H)</div>
<div class="b" style="left:21px;top:781px;width:16px;height:16px"><svg width="16" height="16" viewBox="0 0 16 16"><path d="M1 4h4.800v5zM15 4h-4.800v5z" fill="#f08a24"/><rect x="0.500" y="1" width="15" height="3" fill="#4a8fe0"/><rect x="5.800" y="4" width="4.400" height="11" fill="#d6e6fa" stroke="#4a8fe0" stroke-width="1"/></svg></div>
<div class="t " style="left:44px;top:781.7px;height:16px;line-height:16px;color:#000;font-size:12px;">板加腋(B)</div>
<div class="t " style="left:2px;top:805.7px;height:16px;line-height:16px;color:#000;font-size:12px;">装配式</div>
<div class="t " style="left:2px;top:829.7px;height:16px;line-height:16px;color:#000;font-size:12px;">楼梯</div>
<div class="b" style="left:21px;top:853px;width:16px;height:16px"><svg width="16" height="16" viewBox="0 0 16 16"><path d="M1.500 15v-13.500h13v3h-4v3.500h-4v3.500h-2.500v3.500z" fill="#eaf2fc" stroke="#4a8fe0" stroke-width="1.200"/><path d="M5 1.500v13M1.500 5h9M1.500 8.500h5" stroke="#4a8fe0" stroke-width="1"/></svg></div>
<div class="t " style="left:44px;top:853.7px;height:16px;line-height:16px;color:#000;font-size:12px;">楼梯(R)</div>
<div class="b" style="left:21px;top:877px;width:16px;height:16px"><svg width="16" height="16" viewBox="0 0 16 16"><path d="M0 10l3-1.500v-2l3-1.500v-2l3-1.500v-1l5-.500 2 3-3 3v1.500l-3 1.500v2l-3 1.500v2l-4 1z" fill="#4a8fe0"/><path d="M8.500 3.500l2 2M11 2.500l2 2" stroke="#fff" stroke-width="1"/></svg></div>
<div class="t " style="left:44px;top:877.7px;height:16px;line-height:16px;color:#000;font-size:12px;">直形梯段(R)</div>
<div class="b" style="left:21px;top:901px;width:16px;height:16px"><svg width="16" height="16" viewBox="0 0 16 16"><path d="M7 1l3 2-5 2 5 2.500-5 2.500 5 2.500-4 2.500" fill="none" stroke="#4a8fe0" stroke-width="1.100"/></svg></div>
<div class="t " style="left:44px;top:901.7px;height:16px;line-height:16px;color:#000;font-size:12px;">螺旋梯段(R)</div>
<div class="b" style="left:21px;top:925px;width:16px;height:16px"><svg width="16" height="16" viewBox="0 0 16 16"><rect x="3" y="0.800" width="10.500" height="14.400" fill="#9cc3f2" stroke="#4a8fe0" stroke-width="1.300"/><rect x="5.500" y="3.500" width="5.500" height="9" fill="#fff" stroke="#4a8fe0" stroke-width="1"/></svg></div>
<div class="t " style="left:44px;top:925.7px;height:16px;line-height:16px;color:#000;font-size:12px;">楼梯井(R)</div>
<div class="t " style="left:2px;top:949.7px;height:16px;line-height:16px;color:#000;font-size:12px;">装修</div>
<div class="t " style="left:2px;top:973.7px;height:16px;line-height:16px;color:#000;font-size:12px;">土方</div>
<div class="t " style="left:2px;top:997.7px;height:16px;line-height:16px;color:#000;font-size:12px;">基础</div>
<div class="t" style="left:43px;top:256px;width:30px;height:10px;line-height:10px;background:#ffd86a;color:#c8952a;font-size:8px;text-align:center;font-family:'Liberation Serif',serif;letter-spacing:0.5px">VIP</div>
<div class="t" style="left:43px;top:808px;width:30px;height:10px;line-height:10px;background:#ffd86a;color:#c8952a;font-size:8px;text-align:center;font-family:'Liberation Serif',serif;letter-spacing:0.5px">VIP</div>
<div class="b" style="left:193px;top:161px;width:281px;height:12px;background:#d3d6db;border:1px solid #c3c6cb;border-bottom:none"></div>
<svg width="1384" height="1018" viewBox="0 0 1384 1018"><path d="M462.200 164.5l5.400 5.400M467.600 164.5l-5.400 5.400" stroke="#787878" stroke-width="1.400"/></svg>
<div class="b" style="left:193px;top:172px;width:281px;height:24px;background:#efefef;border:1px solid #c8cbcf"></div>
<div class="b" style="left:259px;top:174px;width:65px;height:21px;background:#e2e2e2;border-left:1px solid #cfcfcf;border-right:1px solid #cfcfcf"></div>
<div class="t " style="left:202px;top:177.2px;height:16px;line-height:16px;color:#222;font-size:12px;font-weight:bold">构件列表</div>
<div class="t " style="left:267px;top:177.2px;height:16px;line-height:16px;color:#9a9a9a;font-size:12px;">图纸管理</div>
<div class="b" style="left:193px;top:196px;width:281px;height:28px;background:#f1f1f1;border:1px solid #c8cbcf;border-top:none"></div>
<div class="b" style="left:199px;top:202px;width:16px;height:16px"><svg width="16" height="16" viewBox="0 0 16 16"><path d="M3.500 3.500h7l3 3v8h-10z" fill="#fff" stroke="#8c8c8c" stroke-width="1"/><path d="M5 8h7M5 10h7M5 12h7" stroke="#c9c9c9" stroke-width="0.800"/><path d="M2.500 0v5M0 2.500h5M.700 .700l3.600 3.600M4.300 .700l-3.600 3.600" stroke="#f08a24" stroke-width="0.900"/></svg></div>
<div class="t " style="left:219px;top:202.7px;height:16px;line-height:16px;color:#222;font-size:12px;">新建</div>
<div class="b" style="left:262px;top:202px;width:16px;height:16px"><svg width="16" height="16" viewBox="0 0 16 16"><path d="M2.500 1.500h7l3.500 3.500v9.500h-10.500z" fill="#fff" stroke="#4a8fe0" stroke-width="1.200"/><path d="M5 7h6M5 9.500h6M5 12h6" stroke="#4a8fe0" stroke-width="1"/></svg></div>
<div class="t " style="left:281px;top:202.7px;height:16px;line-height:16px;color:#222;font-size:12px;">复制</div>
<div class="b" style="left:313px;top:202px;width:16px;height:16px"><svg width="16" height="16" viewBox="0 0 16 16"><path d="M1.500 1.500h6l2 2v8h-8z" fill="#fff" stroke="#8c8c8c" stroke-width="1"/><path d="M4.500 4.500h6l2.500 2.500v8h-8.500z" fill="#fff" stroke="#8c8c8c" stroke-width="1"/><rect x="8.500" y="9.500" width="6.500" height="6" fill="#fff" stroke="#e04a4a" stroke-width="1.200"/><path d="M10 11l3.500 3.500M13.500 11l-3.500 3.500" stroke="#e04a4a" stroke-width="1.100"/></svg></div>
<div class="t " style="left:333px;top:202.7px;height:16px;line-height:16px;color:#222;font-size:12px;">删除</div>
<div class="b" style="left:365px;top:202px;width:16px;height:16px"><svg width="16" height="16" viewBox="0 0 16 16"><path d="M1 6v9.500h9" fill="none" stroke="#f08a24" stroke-width="1.100"/><path d="M3.500 4v9h9" fill="none" stroke="#f08a24" stroke-width="1.100"/><rect x="6" y="0.600" width="9.400" height="9.400" fill="#b9d6f7" stroke="#4a8fe0" stroke-width="1.100"/></svg></div>
<div class="t " style="left:385px;top:202.7px;height:16px;line-height:16px;color:#222;font-size:12px;">层间复制</div>
<div class="b" style="left:247.5px;top:208.25px;width:0;height:0;border-left:3.5px solid transparent;border-right:3.5px solid transparent;border-top:3.5px solid #555"></div>
<svg width="480" height="230" viewBox="0 0 480 230"><path d="M463 207l3 3-3 3zM467 207l3 3-3 3z" fill="#222"/></svg>
<div class="b" style="left:193px;top:224px;width:281px;height:20px;background:#ffffff;border:1px solid #c8cbcf;border-top:none"></div>
<div class="t " style="left:196px;top:226.2px;height:16px;line-height:16px;color:#9a9a9a;font-size:12px;">搜索构件...</div>
<svg width="480" height="250" viewBox="0 0 480 250"><circle cx="459.5" cy="232" r="3.2" fill="none" stroke="#3c8de0" stroke-width="1.6"/><path d="M462 234.5l3 3.2" stroke="#3c8de0" stroke-width="2"/></svg>
<div class="b" style="left:193px;top:244px;width:281px;height:220px;background:#ffffff;border:1px solid #b9bcc0;border-top:none"></div>
<svg width="480" height="300" viewBox="0 0 480 300"><path d="M210 254.5v6.5h-6.5z" fill="#3c3c3c"/></svg>
<div class="t " style="left:217px;top:250.7px;height:16px;line-height:16px;color:#000;font-size:12px;">现浇板</div>
<div class="b" style="left:234px;top:271px;width:27px;height:21px;background:#b5cef0;"></div>
<div class="t " style="left:237px;top:274.2px;height:16px;line-height:16px;color:#000;font-size:12px;">B-1</div>
<div class="b" style="left:193px;top:464px;width:281px;height:5px;background:#ffffff;"></div>
<div class="b" style="left:193px;top:468px;width:281px;height:12px;background:#d3d6db;border:1px solid #c3c6cb;border-bottom:none"></div>
<svg width="1384" height="1018" viewBox="0 0 1384 1018"><path d="M462.200 471.5l5.400 5.400M467.600 471.5l-5.400 5.400" stroke="#787878" stroke-width="1.400"/></svg>
<div class="b" style="left:193px;top:479px;width:281px;height:24px;background:#efefef;border:1px solid #c8cbcf"></div>
<div class="b" style="left:259px;top:481px;width:65px;height:21px;background:#e2e2e2;border-left:1px solid #cfcfcf;border-right:1px solid #cfcfcf"></div>
<div class="t " style="left:202px;top:484.2px;height:16px;line-height:16px;color:#222;font-size:12px;font-weight:bold">属性列表</div>
<div class="t " style="left:267px;top:484.2px;height:16px;line-height:16px;color:#9a9a9a;font-size:12px;">图层管理</div>
<div class="b" style="left:193px;top:503px;width:281px;height:515px;background:#ffffff;border-left:1px solid #c8cbcf;border-right:1px solid #c8cbcf"></div>
<div class="b" style="left:194px;top:503px;width:22px;height:515px;background:#efefef;"></div>
<div class="b" style="left:215px;top:503px;width:1px;height:315px;background:#cfcfcf;"></div>
<div class="b" style="left:194px;top:503px;width:278px;height:21px;background:#f1f1f1;"></div>
<div class="b" style="left:317px;top:503px;width:114px;height:21px;background:#7bb7f5;"></div>
<div class="t " style="left:242px;top:506.2px;height:16px;line-height:16px;color:#222;font-size:12px;">属性名称</div>
<div class="t " style="left:355px;top:506.2px;height:16px;line-height:16px;color:#fff;font-size:12px;">属性值</div>
<div class="t " style="left:439px;top:506.2px;height:16px;line-height:16px;color:#222;font-size:12px;">附加</div>
<div class="t" style="left:194px;top:526.5px;width:22px;height:16px;line-height:16px;text-align:center;color:#333;font-size:12px">1</div>
<div class="t " style="left:219px;top:527.2px;height:16px;line-height:16px;color:#2050e0;font-size:12px;">名称</div>
<div class="t " style="left:320px;top:527.2px;height:16px;line-height:16px;color:#000;font-size:12px;">B-1</div>
<div class="t" style="left:194px;top:547.5px;width:22px;height:16px;line-height:16px;text-align:center;color:#333;font-size:12px">2</div>
<div class="t " style="left:219px;top:548.2px;height:16px;line-height:16px;color:#2050e0;font-size:12px;">厚度(mm)</div>
<div class="t " style="left:320px;top:548.2px;height:16px;line-height:16px;color:#000;font-size:12px;">200</div>
<div class="b" style="left:444px;top:549px;width:13px;height:13px;background:#fff;border:1px solid #7d7d7d;border-radius:3px"></div>
<div class="t" style="left:194px;top:568.5px;width:22px;height:16px;line-height:16px;text-align:center;color:#333;font-size:12px">3</div>
<div class="t " style="left:219px;top:569.2px;height:16px;line-height:16px;color:#2050e0;font-size:12px;">类别</div>
<div class="t " style="left:320px;top:569.2px;height:16px;line-height:16px;color:#000;font-size:12px;">有梁板</div>
<div class="b" style="left:444px;top:570px;width:13px;height:13px;background:#fff;border:1px solid #7d7d7d;border-radius:3px"></div>
<div class="t" style="left:194px;top:589.5px;width:22px;height:16px;line-height:16px;text-align:center;color:#333;font-size:12px">4</div>
<div class="t " style="left:219px;top:590.2px;height:16px;line-height:16px;color:#000;font-size:12px;">是否是楼板</div>
<div class="t " style="left:320px;top:590.2px;height:16px;line-height:16px;color:#000;font-size:12px;">是</div>
<div class="b" style="left:444px;top:591px;width:13px;height:13px;background:#fff;border:1px solid #7d7d7d;border-radius:3px"></div>
<div class="t" style="left:194px;top:610.5px;width:22px;height:16px;line-height:16px;text-align:center;color:#333;font-size:12px">5</div>
<div class="t " style="left:219px;top:611.2px;height:16px;line-height:16px;color:#2050e0;font-size:12px;">混凝土类型</div>
<div class="t " style="left:320px;top:611.2px;height:16px;line-height:16px;color:#000;font-size:12px;">(混凝土20石)</div>
<div class="b" style="left:444px;top:612px;width:13px;height:13px;background:#fff;border:1px solid #7d7d7d;border-radius:3px"></div>
<div class="t" style="left:194px;top:631.5px;width:22px;height:16px;line-height:16px;text-align:center;color:#333;font-size:12px">6</div>
<div class="t " style="left:219px;top:632.2px;height:16px;line-height:16px;color:#2050e0;font-size:12px;">混凝土强度等级</div>
<div class="t " style="left:320px;top:632.2px;height:16px;line-height:16px;color:#000;font-size:12px;">(C30)</div>
<div class="b" style="left:444px;top:633px;width:13px;height:13px;background:#fff;border:1px solid #7d7d7d;border-radius:3px"></div>
<div class="t" style="left:194px;top:652.5px;width:22px;height:16px;line-height:16px;text-align:center;color:#333;font-size:12px">7</div>
<div class="t " style="left:219px;top:653.2px;height:16px;line-height:16px;color:#2050e0;font-size:12px;">混凝土外加剂</div>
<div class="t " style="left:320px;top:653.2px;height:16px;line-height:16px;color:#000;font-size:12px;">(无)</div>
<div class="t" style="left:194px;top:673.5px;width:22px;height:16px;line-height:16px;text-align:center;color:#333;font-size:12px">8</div>
<div class="t " style="left:219px;top:674.2px;height:16px;line-height:16px;color:#2050e0;font-size:12px;">泵送类型</div>
<div class="t " style="left:320px;top:674.2px;height:16px;line-height:16px;color:#000;font-size:12px;">(混凝土泵)</div>
<div class="t" style="left:194px;top:694.5px;width:22px;height:16px;line-height:16px;text-align:center;color:#333;font-size:12px">9</div>
<div class="t " style="left:219px;top:695.2px;height:16px;line-height:16px;color:#000;font-size:12px;">泵送高度(m)</div>
<div class="t" style="left:194px;top:715.5px;width:22px;height:16px;line-height:16px;text-align:center;color:#333;font-size:12px">10</div>
<div class="t " style="left:219px;top:716.2px;height:16px;line-height:16px;color:#000;font-size:12px;">顶标高(m)</div>
<div class="t " style="left:320px;top:716.2px;height:16px;line-height:16px;color:#000;font-size:12px;">层顶标高</div>
<div class="b" style="left:444px;top:717px;width:13px;height:13px;background:#fff;border:1px solid #7d7d7d;border-radius:3px"></div>
<div class="b" style="left:194px;top:734px;width:22px;height:21px;background:#69aef6;"></div>
<div class="t" style="left:194px;top:736.5px;width:22px;height:16px;line-height:16px;text-align:center;color:#fff;font-weight:bold;font-size:12px">11</div>
<div class="b" style="left:316px;top:733px;width:116px;height:22px;background:#ffffff;border:2px solid #6c6c6c"></div>
<div class="t " style="left:219px;top:737.2px;height:16px;line-height:16px;color:#000;font-size:12px;">备注</div>
<div class="b" style="left:444px;top:738px;width:13px;height:13px;background:#fff;border:1px solid #7d7d7d;border-radius:3px"></div>
<div class="b" style="left:317px;top:755px;width:114px;height:21px;background:#e9e9e9;"></div>
<div class="t" style="left:194px;top:757.5px;width:22px;height:16px;line-height:16px;text-align:center;color:#333;font-size:12px">12</div>
<div class="b" style="left:219px;top:759px;width:12px;height:12px;background:#fff;border:1px solid #8a8a8a;border-radius:2px"></div>
<div class="t" style="left:219px;top:759px;width:12px;height:12px;line-height:11px;text-align:center;color:#333;font-size:10px">+</div>
<div class="t " style="left:237px;top:758.2px;height:16px;line-height:16px;color:#000;font-size:12px;">钢筋业务属性</div>
<div class="b" style="left:317px;top:776px;width:114px;height:21px;background:#e9e9e9;"></div>
<div class="t" style="left:194px;top:778.5px;width:22px;height:16px;line-height:16px;text-align:center;color:#333;font-size:12px">23</div>
<div class="b" style="left:219px;top:780px;width:12px;height:12px;background:#fff;border:1px solid #8a8a8a;border-radius:2px"></div>
<div class="t" style="left:219px;top:780px;width:12px;height:12px;line-height:11px;text-align:center;color:#333;font-size:10px">+</div>
<div class="t " style="left:237px;top:779.2px;height:16px;line-height:16px;color:#000;font-size:12px;">土建业务属性</div>
<div class="b" style="left:317px;top:797px;width:114px;height:21px;background:#e9e9e9;"></div>
<div class="t" style="left:194px;top:799.5px;width:22px;height:16px;line-height:16px;text-align:center;color:#333;font-size:12px">29</div>
<div class="b" style="left:219px;top:801px;width:12px;height:12px;background:#fff;border:1px solid #8a8a8a;border-radius:2px"></div>
<div class="t" style="left:219px;top:801px;width:12px;height:12px;line-height:11px;text-align:center;color:#333;font-size:10px">+</div>
<div class="t " style="left:237px;top:800.2px;height:16px;line-height:16px;color:#000;font-size:12px;">显示样式</div>
<div class="b" style="left:194px;top:502px;width:278px;height:1px;background:#d6d6d6;"></div>
<div class="b" style="left:194px;top:523px;width:278px;height:1px;background:#d6d6d6;"></div>
<div class="b" style="left:194px;top:544px;width:278px;height:1px;background:#d6d6d6;"></div>
<div class="b" style="left:194px;top:565px;width:278px;height:1px;background:#d6d6d6;"></div>
<div class="b" style="left:194px;top:586px;width:278px;height:1px;background:#d6d6d6;"></div>
<div class="b" style="left:194px;top:607px;width:278px;height:1px;background:#d6d6d6;"></div>
<div class="b" style="left:194px;top:628px;width:278px;height:1px;background:#d6d6d6;"></div>
<div class="b" style="left:194px;top:649px;width:278px;height:1px;background:#d6d6d6;"></div>
<div class="b" style="left:194px;top:670px;width:278px;height:1px;background:#d6d6d6;"></div>
<div class="b" style="left:194px;top:691px;width:278px;height:1px;background:#d6d6d6;"></div>
<div class="b" style="left:194px;top:712px;width:278px;height:1px;background:#d6d6d6;"></div>
<div class="b" style="left:194px;top:733px;width:278px;height:1px;background:#d6d6d6;"></div>
<div class="b" style="left:194px;top:754px;width:278px;height:1px;background:#d6d6d6;"></div>
<div class="b" style="left:194px;top:775px;width:278px;height:1px;background:#d6d6d6;"></div>
<div class="b" style="left:194px;top:796px;width:278px;height:1px;background:#d6d6d6;"></div>
<div class="b" style="left:194px;top:817px;width:278px;height:1px;background:#d6d6d6;"></div>
<div class="b" style="left:316px;top:503px;width:1px;height:315px;background:#d6d6d6;"></div>
<div class="b" style="left:430px;top:503px;width:1px;height:315px;background:#d6d6d6;"></div>
<div class="b" style="left:471px;top:503px;width:1px;height:315px;background:#d6d6d6;"></div>
<div class="b" style="left:474px;top:161px;width:5px;height:857px;background:#ffffff;"></div>
<div class="b" style="left:474px;top:590px;width:5px;height:100px;background:#555b68;"></div>
<div class="b" style="left:478px;top:161px;width:906px;height:857px;background:#000000;"></div>
<svg width="1384" height="1018" viewBox="0 0 1384 1018"><defs><clipPath id="vp"><rect x="478" y="161" width="906" height="857"/></clipPath></defs><g clip-path="url(#vp)" shape-rendering="crispEdges">
<polygon points="478.0,161.0 900.0,161.0 634.0,294.0 478.0,166.0" fill="#323232" />
<polygon points="478.0,166.0 634.0,294.0 634.0,305.0 478.0,177.0" fill="#262626" />
<polygon points="478.0,177.5 488.0,186.0 478.0,191.0" fill="#187818" />
<line x1="478.0" y1="443.6" x2="682.0" y2="333.0" stroke="#ff0000" stroke-width="1.25" shape-rendering="geometricPrecision" />
<line x1="682.0" y1="333.0" x2="852.0" y2="239.5" stroke="#ff0000" stroke-width="1.25" shape-rendering="geometricPrecision" />
<polygon points="634.0,293.7 880.0,160.2 900.0,161.0 930.0,161.0 930.0,160.6 654.7,310.0" fill="#187818" />
<polygon points="654.7,310.0 930.0,160.6 930.0,196.4 654.7,345.8" fill="#126612" />
<polygon points="634.0,293.7 654.7,310.0 654.7,345.8 634.0,328.4" fill="#0f5a0f" />
<polygon points="830.0,228.7 830.0,197.3 894.5,161.0 1100.0,161.0 1100.3,161.0 1113.3,167.6 1129.1,162.8 1142.0,173.0 1157.8,168.2 1170.6,178.4 1186.4,173.6 1199.3,183.9 1215.1,179.1 1227.9,189.3 1243.7,184.5 1256.6,194.7 1272.4,189.9 1285.3,200.1 1301.1,195.3 1313.9,205.5 1329.7,200.7 1342.6,211.0 1358.4,206.2 1371.2,216.4 1387.0,211.6 1384.0,211.0 1218.3,300.8" fill="#1c78a0" />
<polygon points="858.2,202.7 886.8,225.4 886.8,208.1 915.4,230.8 915.4,213.5 944.1,236.2 944.1,218.9 972.7,241.7 972.7,224.4 1001.3,247.1 1001.3,229.8 1029.9,252.5 1029.9,235.2 1058.5,257.9 1058.5,240.6 1087.2,263.3 1087.2,246.0 1115.8,268.7 1115.8,251.4 1144.4,274.1 1144.4,256.8 1173.0,279.6 1173.0,262.3 1201.6,285.0 1201.6,267.7 1230.3,290.4 1230.3,273.1 1253.0,291.0 1218.3,300.8 858.2,234.0" fill="#155c7a" />
<polygon points="1084.4,373.6 1390.0,207.8 1390.0,233.7 1104.1,388.9" fill="#187818" />
<polygon points="1104.1,388.9 1390.0,233.7 1390.0,270.3 1104.1,425.5" fill="#126612" />
<polygon points="1084.4,373.6 1104.1,388.9 1104.1,425.5 1084.4,409.9" fill="#0f5a0f" />
<line x1="1249.0" y1="166.0" x2="1290.0" y2="197.3" stroke="#ff0000" stroke-width="1.3" shape-rendering="geometricPrecision" />
<line x1="478.0" y1="555.3" x2="1008.8" y2="988.4" stroke="#ff0000" stroke-width="1.25" shape-rendering="geometricPrecision" />
<line x1="1008.8" y1="988.4" x2="1386.0" y2="784.0" stroke="#ff0000" stroke-width="1.25" shape-rendering="geometricPrecision" />
<line x1="1386.0" y1="786.5" x2="936.0" y2="419.0" stroke="#ff0000" stroke-width="1.25" shape-rendering="geometricPrecision" />
<line x1="701.7" y1="739.3" x2="1386.0" y2="365.5" stroke="#ff0000" stroke-width="1.25" shape-rendering="geometricPrecision" />
<line x1="478.0" y1="862.1" x2="701.7" y2="739.3" stroke="#0c8a0c" stroke-width="1.25" shape-rendering="geometricPrecision" />
<line x1="478.0" y1="811.5" x2="730.0" y2="1018.5" stroke="#0c8a0c" stroke-width="1.25" shape-rendering="geometricPrecision" />
<line x1="483.0" y1="839.4" x2="547.1" y2="843.4" stroke="#0c8a0c" stroke-width="1.25" shape-rendering="geometricPrecision" />
<line x1="955.0" y1="1019.0" x2="1008.8" y2="989.5" stroke="#0c8a0c" stroke-width="1.25" shape-rendering="geometricPrecision" />
<line x1="1008.8" y1="989.5" x2="1045.0" y2="1019.0" stroke="#0c8a0c" stroke-width="1.25" shape-rendering="geometricPrecision" />
<line x1="1339.0" y1="1018.0" x2="1386.0" y2="992.5" stroke="#0c8a0c" stroke-width="1.25" shape-rendering="geometricPrecision" />
<polygon points="680.2,326.0 1108.7,945.6 1108.7,950.0 680.2,331.0" fill="#1a6e94" />
<polygon points="680.2,297.9 1108.7,917.3 1108.7,946.0 680.2,326.4" fill="#282828" />
<polygon points="796.3,290.7 796.3,309.5 736.3,342.1 736.3,323.3" fill="#17688a" />
<polygon points="767.7,267.6 796.3,290.7 736.3,323.3 707.7,300.2" fill="#1c78a0" />
<polygon points="824.9,332.0 824.9,350.9 764.9,383.4 764.9,364.6" fill="#17688a" />
<polygon points="796.3,308.9 824.9,332.0 764.9,364.6 736.3,341.5" fill="#1c78a0" />
<polygon points="853.5,373.4 853.5,392.2 793.5,424.8 793.5,405.9" fill="#17688a" />
<polygon points="824.9,350.3 853.5,373.4 793.5,405.9 764.9,382.8" fill="#1c78a0" />
<polygon points="882.1,414.7 882.1,433.6 822.1,466.1 822.1,447.3" fill="#17688a" />
<polygon points="853.5,391.6 882.1,414.7 822.1,447.3 793.5,424.2" fill="#1c78a0" />
<polygon points="910.7,456.1 910.7,474.9 850.7,507.5 850.7,488.6" fill="#17688a" />
<polygon points="882.1,433.0 910.7,456.1 850.7,488.6 822.1,465.5" fill="#1c78a0" />
<polygon points="939.2,497.4 939.2,516.2 879.2,548.8 879.2,530.0" fill="#17688a" />
<polygon points="910.7,474.3 939.2,497.4 879.2,530.0 850.7,506.9" fill="#1c78a0" />
<polygon points="967.8,538.7 967.8,557.6 907.8,590.1 907.8,571.3" fill="#17688a" />
<polygon points="939.2,515.6 967.8,538.7 907.8,571.3 879.2,548.2" fill="#1c78a0" />
<polygon points="996.4,580.1 996.4,598.9 936.4,631.5 936.4,612.6" fill="#17688a" />
<polygon points="967.8,557.0 996.4,580.1 936.4,612.6 907.8,589.5" fill="#1c78a0" />
<polygon points="1025.0,621.4 1025.0,640.3 965.0,672.8 965.0,654.0" fill="#17688a" />
<polygon points="996.4,598.3 1025.0,621.4 965.0,654.0 936.4,630.9" fill="#1c78a0" />
<polygon points="1053.6,662.8 1053.6,681.6 993.6,714.2 993.6,695.3" fill="#17688a" />
<polygon points="1025.0,639.7 1053.6,662.8 993.6,695.3 965.0,672.2" fill="#1c78a0" />
<polygon points="1082.2,704.1 1082.2,722.9 1022.2,755.5 1022.2,736.7" fill="#17688a" />
<polygon points="1053.6,681.0 1082.2,704.1 1022.2,736.7 993.6,713.6" fill="#1c78a0" />
<polygon points="1110.8,745.4 1110.8,764.3 1050.8,796.8 1050.8,778.0" fill="#17688a" />
<polygon points="1082.2,722.3 1110.8,745.4 1050.8,778.0 1022.2,754.9" fill="#1c78a0" />
<polygon points="1139.4,786.8 1139.4,805.6 1079.4,838.2 1079.4,819.3" fill="#17688a" />
<polygon points="1110.8,763.7 1139.4,786.8 1079.4,819.3 1050.8,796.2" fill="#1c78a0" />
<polygon points="1168.0,828.1 1168.0,847.0 1108.0,879.5 1108.0,860.7" fill="#17688a" />
<polygon points="1139.4,805.0 1168.0,828.1 1108.0,860.7 1079.4,837.6" fill="#1c78a0" />
<polygon points="1196.5,869.5 1196.5,888.3 1136.5,920.9 1136.5,902.0" fill="#17688a" />
<polygon points="1168.0,846.4 1196.5,869.5 1136.5,902.0 1108.0,878.9" fill="#1c78a0" />
<polygon points="767.3,249.7 767.7,267.6 796.3,290.7 796.3,308.9 824.9,332.0 824.9,350.3 853.5,373.4 853.5,391.6 882.1,414.7 882.1,433.0 910.7,456.1 910.7,474.3 939.2,497.4 939.2,515.6 967.8,538.7 967.8,557.0 996.4,580.1 996.4,598.3 1025.0,621.4 1025.0,639.7 1053.6,662.8 1053.6,681.0 1082.2,704.1 1082.2,722.3 1110.8,745.4 1110.8,763.7 1139.4,786.8 1139.4,805.0 1168.0,828.1 1168.0,846.4 1196.5,869.5 1196.1,869.1 1202.1,866.1" fill="#282828" />
<polygon points="767.3,249.7 804.5,228.7 1233.6,849.1 1196.1,869.1" fill="#404040" />
<polygon points="1196.1,869.1 1233.6,849.1 1233.6,876.7 1196.1,896.2" fill="#2c2c2c" />
<polygon points="1196.1,896.2 1233.6,876.7 1233.6,881.0 1196.1,900.8" fill="#1c78a0" />
<polygon points="680.2,297.9 717.4,276.9 1145.8,896.5 1108.9,916.8" fill="#404040" />
<polygon points="1108.9,916.8 1145.8,896.5 1145.8,921.0 1108.9,941.0" fill="#2c2c2c" />
<polygon points="1145.8,896.5 1196.1,869.1 1196.1,900.8 1145.8,927.0" fill="#17688a" />
<polygon points="1108.9,941.0 1196.1,895.0 1196.1,900.8 1108.9,948.5" fill="#1c78a0" />
<line x1="1100.0" y1="939.0" x2="1240.0" y2="863.0" stroke="#ff0000" stroke-width="1.25" shape-rendering="geometricPrecision" />
<line x1="741.3" y1="348.4" x2="1084.3" y2="844.3" stroke="#ffffff" stroke-width="1.3" shape-rendering="geometricPrecision" />
<line x1="829.1" y1="300.8" x2="1171.4" y2="797.3" stroke="#ffffff" stroke-width="1.3" shape-rendering="geometricPrecision" />
<polyline points="993.7,818.5 1084.3,844.3 1100.0,761.1" fill="none" stroke="#fff" stroke-width="1.3" shape-rendering="geometricPrecision"/>
<polyline points="1080.9,770.5 1171.4,797.3 1185.8,721.9" fill="none" stroke="#fff" stroke-width="1.3" shape-rendering="geometricPrecision"/>
<rect x="841" y="161" width="3" height="28.7" fill="#a65a1c"/>
<rect x="867" y="161" width="3" height="34.0" fill="#a65a1c"/>
<rect x="896" y="161" width="3" height="39.4" fill="#a65a1c"/>
<rect x="924" y="161" width="3" height="44.8" fill="#a65a1c"/>
<rect x="953" y="161" width="3" height="50.1" fill="#a65a1c"/>
<rect x="982" y="161" width="3" height="55.4" fill="#a65a1c"/>
<rect x="1010" y="161" width="3" height="60.8" fill="#a65a1c"/>
<rect x="1039" y="161" width="3" height="66.1" fill="#a65a1c"/>
<rect x="1067" y="161" width="3" height="71.5" fill="#a65a1c"/>
<rect x="1096" y="161" width="3" height="76.8" fill="#a65a1c"/>
<rect x="1125" y="161" width="3" height="82.2" fill="#a65a1c"/>
<rect x="1153" y="161" width="3" height="87.5" fill="#a65a1c"/>
<rect x="1182" y="161" width="3" height="92.9" fill="#a65a1c"/>
<rect x="1211" y="161" width="3" height="98.2" fill="#a65a1c"/>
<rect x="1239" y="161" width="3" height="103.6" fill="#a65a1c"/>
<rect x="1268" y="161" width="3" height="108.9" fill="#a65a1c"/>
<rect x="803" y="161" width="3" height="50.5" fill="#a65a1c"/>
<rect x="766" y="161" width="3" height="71.3" fill="#a65a1c"/>
<rect x="1220" y="187.5" width="3" height="127.9" fill="#a65a1c"/>
<rect x="1257" y="173" width="3" height="121.8" fill="#a65a1c"/>
<rect x="1294" y="161" width="3" height="113.2" fill="#a65a1c"/>
<polygon points="1216.7,182.1 1272.6,161.0 1284.0,161.0 1284.0,165.0 1224.9,191.9 1216.7,186.4" fill="#82461a" />
<polygon points="1216.7,182.1 1272.6,161.0 1283.4,161.0 1224.9,186.4" fill="#b86620" />
<rect x="792" y="161.0" width="3" height="102.4" fill="#a65a1c"/>
<rect x="821" y="194.9" width="3" height="109.8" fill="#a65a1c"/>
<rect x="849" y="236.3" width="3" height="109.8" fill="#a65a1c"/>
<rect x="878" y="277.7" width="3" height="109.8" fill="#a65a1c"/>
<rect x="907" y="319.0" width="3" height="109.8" fill="#a65a1c"/>
<rect x="935" y="360.4" width="3" height="109.8" fill="#a65a1c"/>
<rect x="964" y="401.8" width="3" height="109.8" fill="#a65a1c"/>
<rect x="992" y="443.2" width="3" height="109.8" fill="#a65a1c"/>
<rect x="1021" y="484.5" width="3" height="109.8" fill="#a65a1c"/>
<rect x="1050" y="525.9" width="3" height="109.8" fill="#a65a1c"/>
<rect x="1078" y="567.3" width="3" height="109.8" fill="#a65a1c"/>
<rect x="1107" y="608.6" width="3" height="109.8" fill="#a65a1c"/>
<rect x="1136" y="650.0" width="3" height="109.8" fill="#a65a1c"/>
<rect x="1164" y="691.4" width="3" height="109.8" fill="#a65a1c"/>
<rect x="1193" y="732.8" width="3" height="109.8" fill="#a65a1c"/>
<polygon points="797.5,161.0 802.5,161.0 1217.2,760.7 1226.2,755.3 1226.2,762.9 1216.7,767.6" fill="#82461a" />
<polygon points="802.5,161.0 816.6,161.0 1226.2,755.3 1217.2,760.7" fill="#b86620" />
<g shape-rendering="auto">
<circle cx="1215" cy="638" r="461" fill="none" stroke="#a9a9a9" stroke-width="0.9"/>
<circle cx="754.3" cy="638.8" r="29.8" fill="none" stroke="#a9a9a9" stroke-width="0.9"/>
<circle cx="1217" cy="177" r="30" fill="none" stroke="#a9a9a9" stroke-width="0.9"/>
</g>
<polygon points="502.1,437.3 498.6,445.6 490.3,449.1 482.0,445.6 478.5,437.3 482.0,429.0 490.3,425.5 498.6,429.0" fill="none" stroke="#0a8c0a" stroke-width="1.5" shape-rendering="geometricPrecision"/>
<text transform="translate(490.6,444.1) scale(0.8,1)" fill="#fff" font-size="18.500" text-anchor="middle" font-family="Liberation Sans, sans-serif">C</text>
<polygon points="501.7,855.7 498.2,864.0 489.9,867.5 481.6,864.0 478.1,855.7 481.6,847.4 489.9,843.9 498.2,847.4" fill="none" stroke="#0a8c0a" stroke-width="1.5" shape-rendering="geometricPrecision"/>
<text transform="translate(490.2,862.5) scale(0.8,1)" fill="#fff" font-size="18.500" text-anchor="middle" font-family="Liberation Sans, sans-serif">B</text>
<text transform="translate(556,1012) rotate(28)" fill="#fff" font-size="17" font-style="italic" font-family="Liberation Sans, sans-serif">300</text>
</g>
<polygon points="266.8,296.9 350.3,273.7 433.9,250.5 517.6,227.4 601.2,204.3 684.8,181.3 768.5,158.3 852.2,135.4 935.8,112.5 1019.5,89.7 1103.2,66.9 1103.7,68.5 1111.5,61.2 1101.0,59.0 1101.5,60.6 1018.0,84.3 934.6,108.0 851.1,131.6 767.6,155.2 684.1,178.7 600.6,202.2 517.1,225.7 433.6,249.1 350.0,272.4 266.4,295.7" fill="#f23a3a"/>
<polygon points="1132.7,80.8 1107.5,124.0 1082.3,167.2 1057.1,210.4 1031.8,253.6 1006.5,296.7 981.2,339.8 955.8,382.9 930.4,426.0 905.0,469.1 879.6,512.1 877.2,510.8 876.2,522.9 886.2,516.0 883.9,514.6 908.7,471.2 933.5,427.8 958.4,384.4 983.3,341.0 1008.2,297.7 1033.2,254.3 1058.1,211.0 1083.2,167.7 1108.2,124.5 1133.3,81.2" fill="#f23a3a"/>
<polygon points="883.9,551.9 894.9,554.2 905.9,556.5 916.9,558.9 927.9,561.3 938.9,563.8 949.9,566.3 960.9,568.8 971.8,571.4 982.8,574.0 993.7,576.6 993.2,579.3 1005.0,576.4 995.3,569.1 994.7,571.7 983.6,569.8 972.5,567.8 961.5,565.9 950.4,563.8 939.3,561.8 928.3,559.7 917.2,557.5 906.2,555.4 895.1,553.2 884.1,550.9" fill="#f23a3a"/>
<ellipse cx="254" cy="293.3" rx="29.5" ry="33.6" fill="none" stroke="#f23a3a" stroke-width="1"/>
<ellipse cx="1153.3" cy="55.7" rx="53.2" ry="26.3" fill="none" stroke="#f23a3a" stroke-width="1"/>
<ellipse cx="869.5" cy="543.5" rx="45.8" ry="41.5" fill="none" stroke="#f23a3a" stroke-width="1"/>
<ellipse cx="1006.4" cy="558.6" rx="31" ry="40.7" fill="none" stroke="#f23a3a" stroke-width="1"/>
</svg>
</body></html>
